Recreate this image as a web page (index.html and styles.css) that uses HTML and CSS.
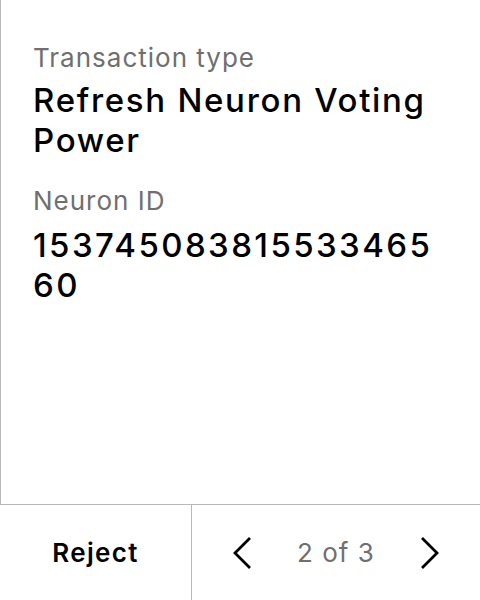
FILE: index.html
```html
<!DOCTYPE html>
<html>
<head>
<meta charset="utf-8">
<link rel="stylesheet" href="styles.css">
</head>
<body>
<div class="screen">
  <main class="content">
    <section class="field field-first">
      <div class="label">Transaction type</div>
      <div class="value">Refresh Neuron Voting Power</div>
    </section>
    <section class="field">
      <div class="label">Neuron ID</div>
      <div class="value number">15374508381553346560</div>
    </section>
  </main>
  <footer class="footer">
    <div class="reject">Reject</div>
    <div class="nav">
      <svg class="chev" width="20" height="34" viewBox="0 0 20 34"><path d="M18 2 L3 17 L18 32" fill="none" stroke="#000" stroke-width="2.8"/></svg>
      <span class="page">2 of 3</span>
      <svg class="chev" width="20" height="34" viewBox="0 0 20 34"><path d="M2 2 L17 17 L2 32" fill="none" stroke="#000" stroke-width="2.8"/></svg>
    </div>
  </footer>
</div>
</body>
</html>
```
FILE: styles.css
```css
html, body {
  margin: 0;
  padding: 0;
  background: #fff;
}
.screen {
  width: 480px;
  height: 600px;
  display: flex;
  flex-direction: column;
  font-family: Inter, "Noto Sans", sans-serif;
  color: #000;
}
.content {
  flex: 1;
  border-left: 1px solid #b8b8b8;
  padding: 42px 32px 0 32px;
  display: flex;
  flex-direction: column;
  gap: 25px;
}
.field {
  display: flex;
  flex-direction: column;
  gap: 8px;
}
.field-first {
  gap: 6px;
}
.label {
  font-size: 26px;
  line-height: 32px;
  letter-spacing: 1px;
  color: #6f6f6f;
}
.value {
  font-size: 33px;
  line-height: 40px;
  font-weight: 500;
  letter-spacing: 1.7px;
}
.number {
  letter-spacing: 2.4px;
  word-break: break-all;
}
.footer {
  height: 95px;
  border-top: 1px solid #b8b8b8;
  display: grid;
  grid-template-columns: 192px 1fr;
}
.reject {
  border-right: 1px solid #b8b8b8;
  display: flex;
  align-items: center;
  justify-content: center;
  font-size: 26px;
  font-weight: 600;
  letter-spacing: 1.3px;
}
.nav {
  display: flex;
  align-items: center;
  justify-content: space-between;
  padding: 0 40px;
}
.page {
  font-size: 26px;
  letter-spacing: 1px;
  color: #6f6f6f;
}
.chev {
  display: block;
}
```
